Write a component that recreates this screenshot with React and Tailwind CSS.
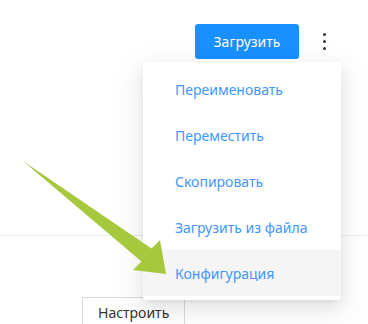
export default function App() {
  const items = ["Переименовать", "Переместить", "Скопировать", "Загрузить из файла", "Конфигурация"];
  return (
    <div className="relative w-[368px] h-[324px] bg-white overflow-hidden" style={{ fontFamily: '"Noto Sans", "Open Sans", sans-serif' }}>
      <div className="flex items-center justify-end pt-[24px] pr-[34px]">
        <button className="h-[35px] w-[104px] rounded-[3px] bg-[#1890ff] text-white text-[14px] leading-none">Загрузить</button>
        <div className="ml-[16px] flex w-[19px] flex-col items-center gap-[4px]">
          <span className="block h-[3px] w-[3px] rounded-full bg-[#333]"></span>
          <span className="block h-[3px] w-[3px] rounded-full bg-[#333]"></span>
          <span className="block h-[3px] w-[3px] rounded-full bg-[#333]"></span>
        </div>
      </div>
      <div className="h-[177px] border-b border-[#ececec]"></div>
      <div className="pl-[82px] pt-[61px]">
        <button className="h-[32px] border border-[#d9d9d9] bg-white px-[15px] text-[14px] text-[#333] leading-none">Настроить</button>
      </div>

      <div className="absolute left-[143px] top-[62px] w-[198px] rounded-[3px] bg-white py-[4px] shadow-[0_3px_6px_-4px_rgba(0,0,0,0.12),0_6px_16px_0_rgba(0,0,0,0.08),0_9px_28px_8px_rgba(0,0,0,0.05)]">
        {items.map((t, i) => (
          <div key={t} className={"flex h-[46px] items-center pl-[32px] text-[14px] text-[#3f97ff] " + (i === 4 ? "bg-[#f5f5f5]" : "")}>{t}</div>
        ))}
      </div>

      <svg className="absolute left-0 top-0" width="368" height="324" viewBox="0 0 368 324">
        <polygon points="23,161 151.5,248.5 160,240 166,274 133,270 141.5,261.5" fill="#a5c83d" />
      </svg>
    </div>
  );
}
